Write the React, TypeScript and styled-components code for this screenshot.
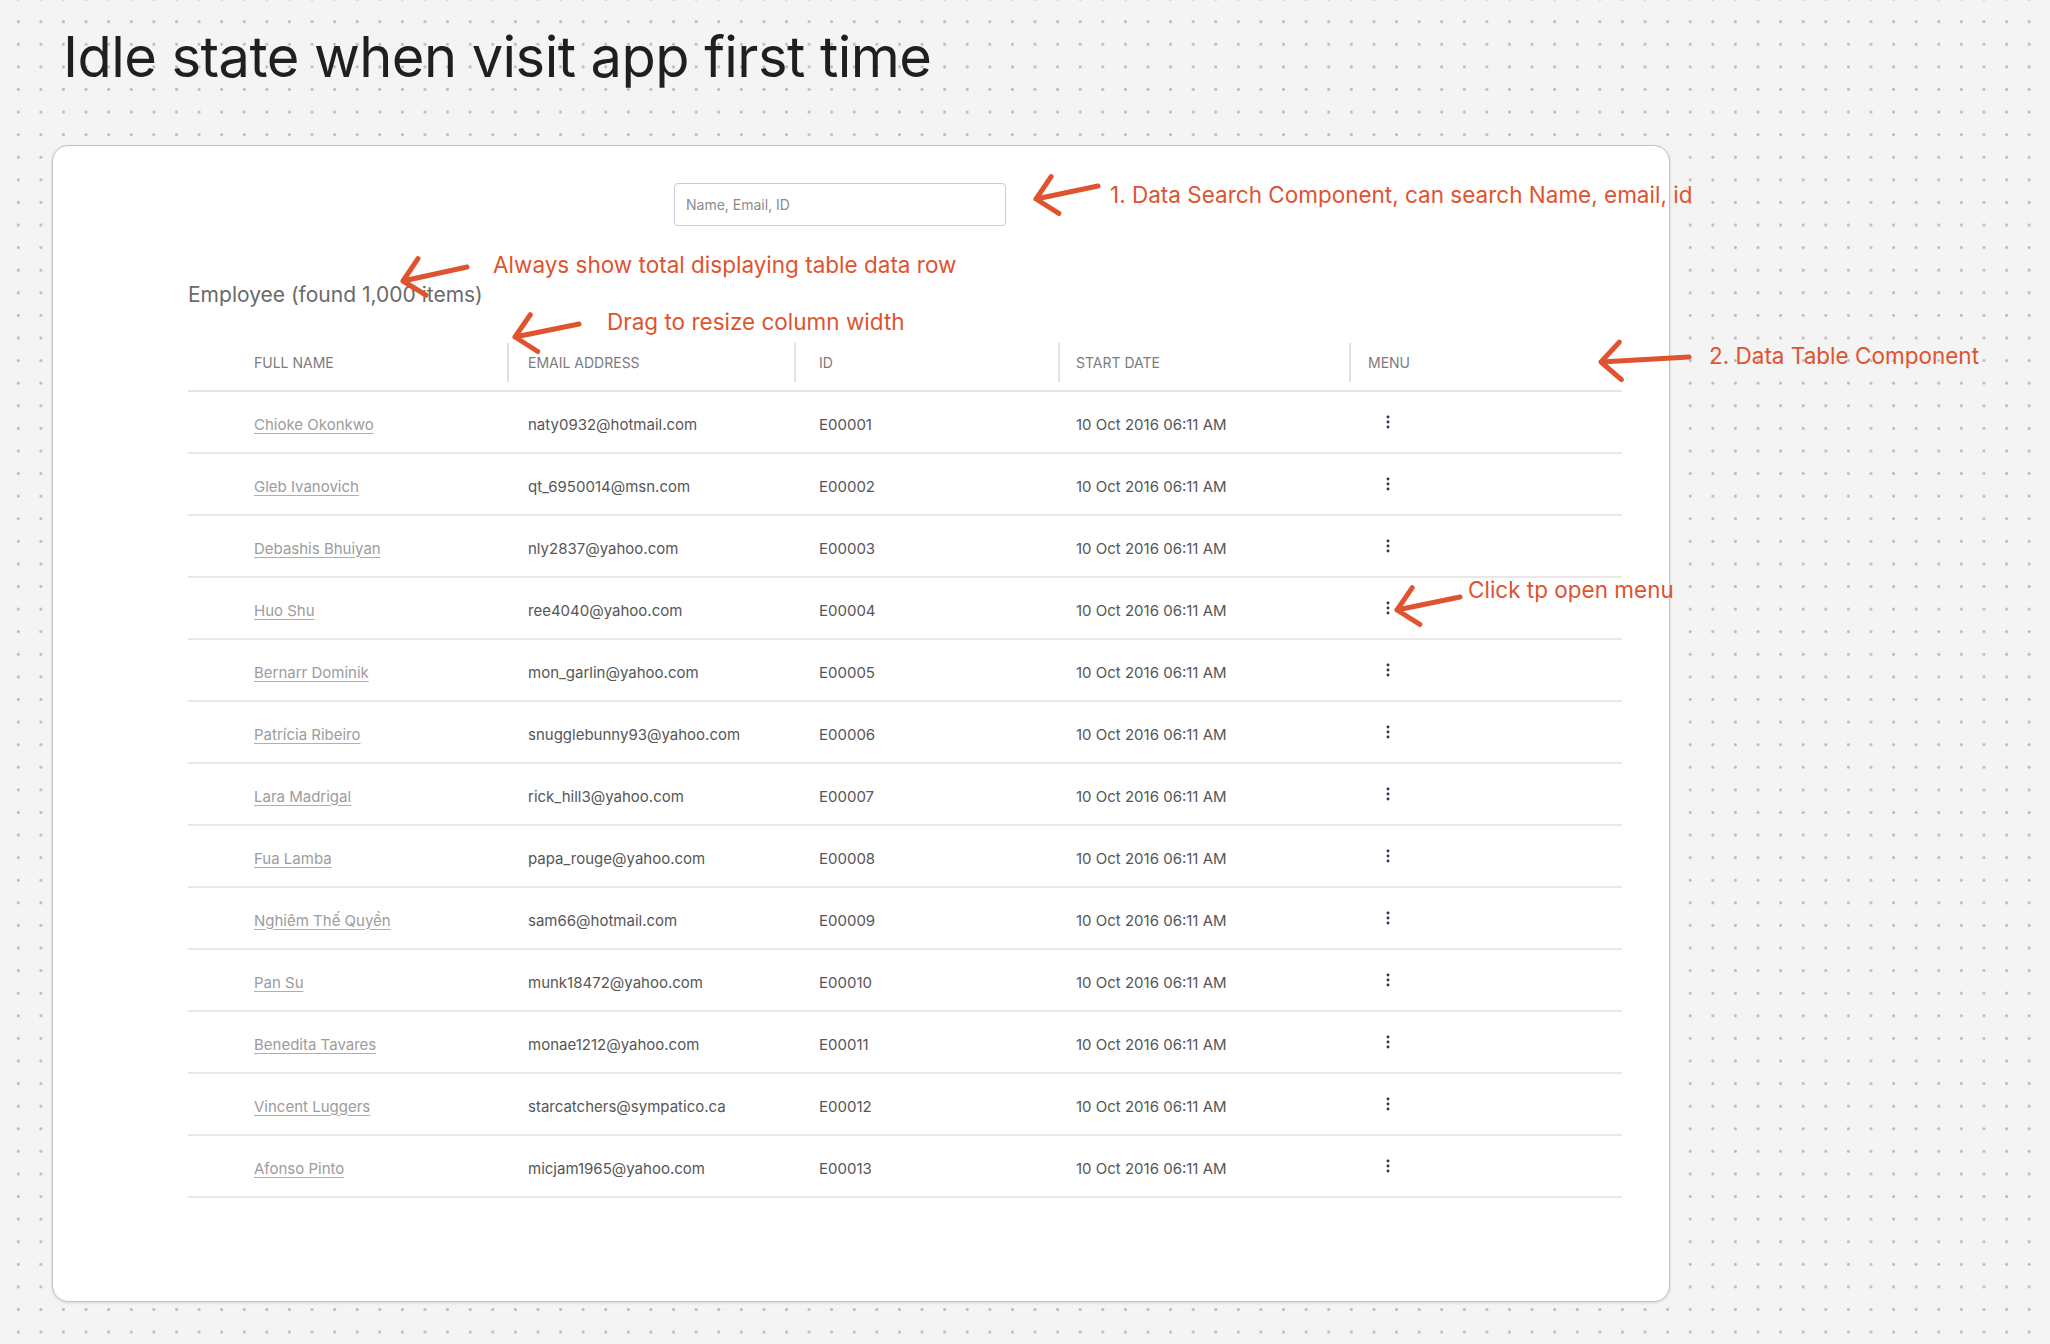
import React from "react";
import styled, { createGlobalStyle } from "styled-components";

const GlobalStyle = createGlobalStyle`
  html, body {
    margin: 0;
    padding: 0;
  }
  body {
    background-color: #f4f4f4;
    background-image: radial-gradient(circle, #b9b9b9 1.1px, transparent 1.7px);
    background-size: 22.6px 22.6px;
    background-position: 7px 10.4px;
    font-family: Inter, "Noto Sans", sans-serif;
    min-height: 1344px;
  }
  * { box-sizing: border-box; }
`;

const Page = styled.div`
  position: relative;
  width: 2050px;
  height: 1344px;
  padding: 23px 0 0 52px;
`;

const Title = styled.h1`
  margin: 0;
  padding-left: 11px;
  font-family: Inter, sans-serif;
  font-weight: 400;
  font-size: 56px;
  line-height: 68px;
  letter-spacing: -0.55px;
  color: #1f1f1f;
`;

const Card = styled.section`
  margin-top: 54px;
  width: 1618px;
  height: 1157px;
  background: #ffffff;
  border: 1px solid #c2c2c2;
  border-radius: 16px;
  box-shadow: 0 1px 3px rgba(0, 0, 0, 0.12);
  padding: 37px 47px 0 135px;
  display: flex;
  flex-direction: column;
`;

const SearchRow = styled.div`
  display: flex;
  padding-left: 486px;
`;

const SearchInput = styled.input`
  width: 332px;
  height: 43px;
  border: 1px solid #c9cbd9;
  border-radius: 4px;
  padding: 0 11px;
  font-family: Inter, sans-serif;
  font-size: 14px;
  color: #333;
  outline: none;
  &::placeholder {
    color: #8c8c8c;
  }
`;

const Caption = styled.h2`
  margin: 56px 0 0 0;
  font-family: Inter, sans-serif;
  font-weight: 400;
  font-size: 21px;
  line-height: 26px;
  color: #6a6a6a;
`;

const Table = styled.div`
  margin-top: 27px;
  width: 1434px;
  display: flex;
  flex-direction: column;
`;

const columns = "319px 287px 264px 291px 1fr";
const headerPad = [66, 19, 23, 16, 17];
const cellPad = [66, 21, 25, 18, 19];

const HeaderRow = styled.div`
  display: grid;
  grid-template-columns: ${columns};
  align-items: center;
  height: 57px;
  border-bottom: 2px solid #e6e6e6;
`;

const HeaderCell = styled.div<{ $first?: boolean; $pad: number }>`
  height: 39px;
  display: flex;
  align-items: center;
  padding-left: ${(p) => p.$pad}px;
  border-left: ${(p) => (p.$first ? "none" : "2px solid #e0e0e0")};
  font-family: Inter, sans-serif;
  font-size: 14px;
  text-transform: uppercase;
  color: #7c7c7c;
`;

const Row = styled.div`
  display: grid;
  grid-template-columns: ${columns};
  align-items: center;
  height: 62px;
  border-bottom: 2px solid #e8e8e8;
`;

const Cell = styled.div<{ $pad: number }>`
  padding-left: ${(p) => p.$pad}px;
  padding-top: 4px;
  font-family: Inter, sans-serif;
  font-size: 15px;
  color: #565656;
  white-space: nowrap;
`;

const NameLink = styled.a`
  display: inline-block;
  margin-top: -4px;
  font-family: Inter, sans-serif;
  font-size: 15px;
  color: #9c9c9c;
  text-decoration: underline;
  text-decoration-color: #b0b0b0;
  text-underline-offset: 3px;
  cursor: pointer;
`;

const MenuButton = styled.button`
  width: 40px;
  height: 28px;
  margin-top: -4px;
  border: none;
  background: transparent;
  padding: 0;
  display: flex;
  align-items: center;
  justify-content: center;
  cursor: pointer;
`;

const Overlay = styled.svg`
  position: absolute;
  left: 0;
  top: 0;
  width: 2050px;
  height: 1344px;
  pointer-events: none;
`;

const Note = styled.div<{ $x: number; $y: number }>`
  position: absolute;
  left: ${(p) => p.$x}px;
  top: ${(p) => p.$y}px;
  font-family: Inter, sans-serif;
  font-size: 22.5px;
  line-height: 28px;
  color: #e0532f;
  white-space: nowrap;
  pointer-events: none;
`;

type Employee = { name: string; email: string; id: string };

const employees: Employee[] = [
  { name: "Chioke Okonkwo", email: "naty0932@hotmail.com", id: "E00001" },
  { name: "Gleb Ivanovich", email: "qt_6950014@msn.com", id: "E00002" },
  { name: "Debashis Bhuiyan", email: "nly2837@yahoo.com", id: "E00003" },
  { name: "Huo Shu", email: "ree4040@yahoo.com", id: "E00004" },
  { name: "Bernarr Dominik", email: "mon_garlin@yahoo.com", id: "E00005" },
  { name: "Patrícia Ribeiro", email: "snugglebunny93@yahoo.com", id: "E00006" },
  { name: "Lara Madrigal", email: "rick_hill3@yahoo.com", id: "E00007" },
  { name: "Fua Lamba", email: "papa_rouge@yahoo.com", id: "E00008" },
  { name: "Nghiêm Thế Quyền", email: "sam66@hotmail.com", id: "E00009" },
  { name: "Pan Su", email: "munk18472@yahoo.com", id: "E00010" },
  { name: "Benedita Tavares", email: "monae1212@yahoo.com", id: "E00011" },
  { name: "Vincent Luggers", email: "starcatchers@sympatico.ca", id: "E00012" },
  { name: "Afonso Pinto", email: "micjam1965@yahoo.com", id: "E00013" },
];

const DotsIcon = () => (
  <svg width="4" height="14" viewBox="0 0 4 14">
    <circle cx="2" cy="2" r="1.45" fill="#2c3652" />
    <circle cx="2" cy="7" r="1.45" fill="#2c3652" />
    <circle cx="2" cy="12" r="1.45" fill="#2c3652" />
  </svg>
);

type Pt = [number, number];

const Arrow = ({ tail, tip, arm = 27 }: { tail: Pt; tip: Pt; arm?: number }) => {
  const dx = tail[0] - tip[0];
  const dy = tail[1] - tip[1];
  const len = Math.hypot(dx, dy);
  const ux = dx / len;
  const uy = dy / len;
  const a = (44 * Math.PI) / 180;
  const r1: Pt = [
    tip[0] + arm * (ux * Math.cos(a) - uy * Math.sin(a)),
    tip[1] + arm * (ux * Math.sin(a) + uy * Math.cos(a)),
  ];
  const r2: Pt = [
    tip[0] + arm * (ux * Math.cos(-a) - uy * Math.sin(-a)),
    tip[1] + arm * (ux * Math.sin(-a) + uy * Math.cos(-a)),
  ];
  const d = `M${tail[0]} ${tail[1]} L${tip[0]} ${tip[1]} M${r1[0]} ${r1[1]} L${tip[0]} ${tip[1]} L${r2[0]} ${r2[1]}`;
  return (
    <path
      d={d}
      fill="none"
      stroke="#e0532f"
      strokeWidth={5}
      strokeLinecap="round"
      strokeLinejoin="round"
    />
  );
};

const headers = ["Full name", "Email address", "ID", "Start date", "Menu"];

export default function App() {
  return (
    <>
      <GlobalStyle />
      <Page>
        <Title>Idle state when visit app first time</Title>
        <Card>
          <SearchRow>
            <SearchInput placeholder="Name, Email, ID" />
          </SearchRow>
          <Caption>Employee (found 1,000 items)</Caption>
          <Table>
            <HeaderRow>
              {headers.map((h, i) => (
                <HeaderCell key={h} $first={i === 0} $pad={headerPad[i]}>
                  {h}
                </HeaderCell>
              ))}
            </HeaderRow>
            {employees.map((e) => (
              <Row key={e.id}>
                <Cell $pad={cellPad[0]}>
                  <NameLink>{e.name}</NameLink>
                </Cell>
                <Cell $pad={cellPad[1]}>{e.email}</Cell>
                <Cell $pad={cellPad[2]}>{e.id}</Cell>
                <Cell $pad={cellPad[3]}>10 Oct 2016 06:11 AM</Cell>
                <Cell $pad={cellPad[4]}>
                  <MenuButton aria-label="Open menu">
                    <DotsIcon />
                  </MenuButton>
                </Cell>
              </Row>
            ))}
          </Table>
        </Card>

        <Overlay viewBox="0 0 2050 1344">
          <Arrow tail={[1098, 186]} tip={[1036, 199]} />
          <Arrow tail={[467, 267]} tip={[403, 281]} />
          <Arrow tail={[579, 324]} tip={[515, 337]} />
          <Arrow tail={[1689, 357]} tip={[1601, 362]} />
          <Arrow tail={[1460, 597]} tip={[1397, 610]} />
        </Overlay>

        <Note $x={1110} $y={181}>1. Data Search Component, can search Name, email, id</Note>
        <Note $x={493} $y={251}>Always show total displaying table data row</Note>
        <Note $x={607} $y={308}>Drag to resize column width</Note>
        <Note $x={1709} $y={342}>2. Data Table Component</Note>
        <Note $x={1468} $y={576}>Click tp open menu</Note>
      </Page>
    </>
  );
}
